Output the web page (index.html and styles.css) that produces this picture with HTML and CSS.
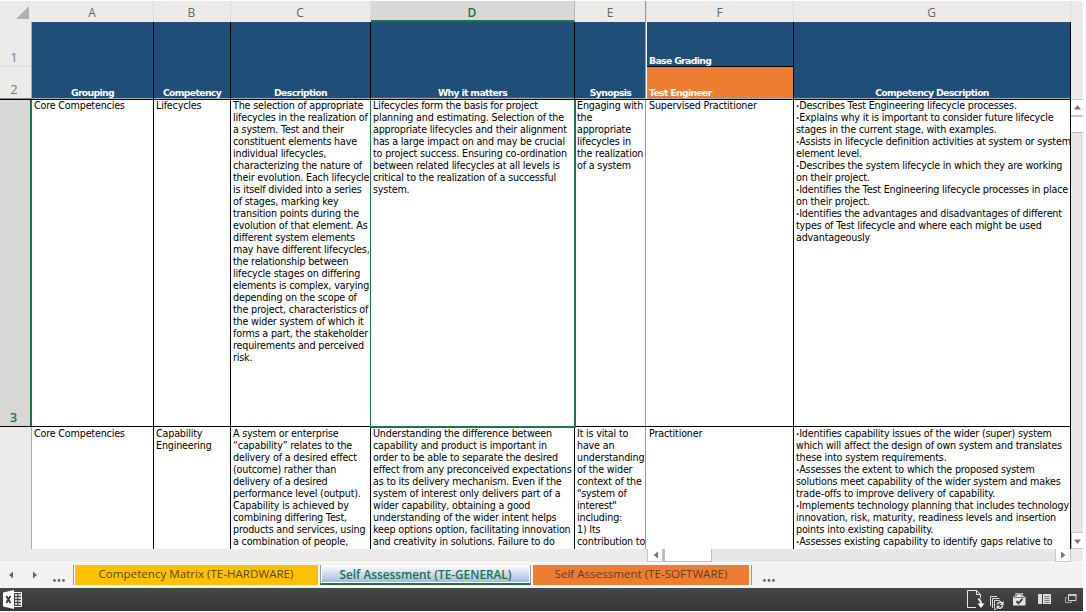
FILE: index.html
```html
<!DOCTYPE html>
<html lang="en">
<head>
<meta charset="utf-8">
<title>Competency Matrix</title>
<link rel="stylesheet" href="styles.css">
</head>
<body>
<div class="app">
  <div class="viewer">
    <div class="sheet">
      <div class="row letters">
        <div class="corner"><svg width="31" height="21"><path d="M29 5V18H16Z" fill="#b1b1b1"/></svg></div>
        <div class="letter">A</div><div class="letter">B</div><div class="letter">C</div>
        <div class="letter active">D</div><div class="letter last-frozen">E</div><div class="letter">F</div><div class="letter">G</div>
      </div>
      <div class="row titles">
        <div class="numbers"><div class="number one">1</div><div class="number two">2</div></div>
        <div class="title">Grouping</div><div class="title">Competency</div><div class="title">Description</div>
        <div class="title active">Why it matters</div><div class="title frozen">Synopsis</div>
        <div class="split"><div class="grading">Base Grading</div><div class="engineer">Test Engineer</div></div>
        <div class="title">Competency Description</div>
      </div>
      <div class="row first">
        <div class="number three">3</div>
        <div class="cell">Core Competencies</div>
        <div class="cell">Lifecycles</div>
        <div class="cell">The selection of appropriate
lifecycles in the realization of
a system. Test and their
constituent elements have
individual lifecycles,
characterizing the nature of
their evolution. Each lifecycle
is itself divided into a series
of stages, marking key
transition points during the
evolution of that element. As
different system elements
may have different lifecycles,
the relationship between
lifecycle stages on differing
elements is complex, varying
depending on the scope of
the project, characteristics of
the wider system of which it
forms a part, the stakeholder
requirements and perceived
risk.</div>
        <div class="cell selected">Lifecycles form the basis for project
planning and estimating. Selection of the
appropriate lifecycles and their alignment
has a large impact on and may be crucial
to project success. Ensuring co-ordination
between related lifecycles at all levels is
critical to the realization of a successful
system.</div>
        <div class="cell frozen">Engaging with
the
appropriate
lifecycles in
the realization
of a system</div>
        <div class="cell">Supervised Practitioner</div>
        <div class="cell"><b>•</b>Describes Test Engineering lifecycle processes.
<b>•</b>Explains why it is important to consider future lifecycle
stages in the current stage, with examples.
<b>•</b>Assists in lifecycle definition activities at system or system
element level.
<b>•</b>Describes the system lifecycle in which they are working
on their project.
<b>•</b>Identifies the Test Engineering lifecycle processes in place
on their project.
<b>•</b>Identifies the advantages and disadvantages of different
types of Test lifecycle and where each might be used
advantageously</div>
      </div>
      <div class="row second">
        <div class="number"></div>
        <div class="cell">Core Competencies</div>
        <div class="cell">Capability
Engineering</div>
        <div class="cell">A system or enterprise
“capability” relates to the
delivery of a desired effect
(outcome) rather than
delivery of a desired
performance level (output).
Capability is achieved by
combining differing Test,
products and services, using
a combination of people,</div>
        <div class="cell">Understanding the difference between
capability and product is important in
order to be able to separate the desired
effect from any preconceived expectations
as to its delivery mechanism. Even if the
system of interest only delivers part of a
wider capability, obtaining a good
understanding of the wider intent helps
keep options option, facilitating innovation
and creativity in solutions. Failure to do</div>
        <div class="cell frozen">It is vital to
have an
understanding
of the wider
context of the
"system of
interest"
including:
1) Its
contribution to</div>
        <div class="cell">Practitioner</div>
        <div class="cell"><b>•</b>Identifies capability issues of the wider (super) system
which will affect the design of own system and translates
these into system requirements.
<b>•</b>Assesses the extent to which the proposed system
solutions meet capability of the wider system and makes
trade-offs to improve delivery of capability.
<b>•</b>Implements technology planning that includes technology
innovation, risk, maturity, readiness levels and insertion
points into existing capability.
<b>•</b>Assesses existing capability to identify gaps relative to
desired capability and therefore recommend approaches</div>
      </div>
    </div>
    <div class="vscroll">
      <div class="vbutton up"><svg width="12" height="16"><path d="M3 9.500H10L6.500 5Z" fill="#777"/></svg></div>
      <div class="vthumb"></div>
      <div class="vbutton down"><svg width="12" height="16"><path d="M2 6.500H9L5.500 11Z" fill="#777"/></svg></div>
    </div>
  </div>
  <div class="hbar">
    <div class="hscroll">
      <div class="hbutton"><svg width="14" height="12"><path d="M10 2.500V9.500L5.500 6Z" fill="#777"/></svg></div>
      <div class="hthumb"></div>
      <div class="hbutton right"><svg width="14" height="12"><path d="M5 2.500V9.500L9.500 6Z" fill="#777"/></svg></div>
    </div>
  </div>
  <div class="tabs">
    <div class="nav">
      <svg width="73" height="25"><path d="M13 8.500V15.500L9 12ZM33 8.500V15.500L37 12Z" fill="#666"/><g fill="#666"><circle cx="54.500" cy="17.500" r="1.400"/><circle cx="59" cy="17.500" r="1.400"/><circle cx="63.500" cy="17.500" r="1.400"/></g></svg>
    </div>
    <div class="tab yellow"><span>Competency Matrix (TE-HARDWARE)</span></div>
    <div class="tab current"><span>Self Assessment (TE-GENERAL)</span></div>
    <div class="tab orange"><span>Self Assessment (TE-SOFTWARE)</span></div>
    <div class="more"><svg width="30" height="25"><g fill="#666"><circle cx="12.500" cy="17.500" r="1.400"/><circle cx="17" cy="17.500" r="1.400"/><circle cx="21.500" cy="17.500" r="1.400"/></g></svg></div>
  </div>
  <div class="status">
    <svg class="logo" width="20" height="19" viewBox="0 0 20 19"><path d="M0 2.500L11 0V19L0 16.500Z" fill="#fff"/><path d="M3.300 6L7.500 13M7.500 6L3.300 13" stroke="#333" stroke-width="1.700"/><path d="M11 2.500H18.500V16.500H11" fill="none" stroke="#fff"/><path d="M12 5H18M12 8H18M12 11H18M12 14H18" stroke="#fff" stroke-width="1.600"/><path d="M14.800 3V16" stroke="#3b3d3f"/></svg>
    <div class="tools">
      <svg width="18" height="21" viewBox="0 0 18 21" fill="none" stroke="#e8e8e8"><path d="M9 18.500H.5V1.500H9.500L13.500 5.500V9M9.500 1.500V5.500H13.500"/><path d="M11 10C13.500 10.500 14 12 14 15.500" stroke-width="2"/><path d="M10.500 14.500H17.500L14 19Z" fill="#fff" stroke="none"/></svg>
      <svg width="15" height="16" viewBox="0 0 15 16" fill="none" stroke="#ddd"><path d="M.5 10V.5H7M2.500 12V2.500H9.500M6 13.500H4.500V4.500H9.500L11 6"/><path d="M7.300 8.500C8.500 5.800 11 5.800 12.300 7.300M12.800 9.500C11.500 12.800 9 12.800 7.800 11.200" stroke-width="1.600"/><path d="M13.700 5V9H9.700ZM6.500 13.500V9.700H10.300Z" fill="#ddd" stroke="none"/></svg>
      <svg width="14" height="14" viewBox="0 0 14 14"><path d="M0 4L2.500 3V0H10V3L12.500 4V12.500H0Z" fill="#e6e6e6"/><path d="M3.500 3V1H9V3M1 4.500H11.500" fill="none" stroke="#777"/><path d="M3.500 8L5.500 10.300L9.500 5.800" fill="none" stroke="#444" stroke-width="2"/></svg>
      <svg width="14" height="11" viewBox="0 0 14 11"><path d="M0 0H4V10H0ZM5 0H13V10H5Z" fill="#dedede"/><path d="M6.500 2.500H11.500M6.500 4.500H11.500M6.500 6.500H11.500M6.500 8.500H11.500" stroke="#777"/></svg>
      <svg width="12" height="10" viewBox="0 0 12 10" fill="none" stroke="#ddd"><path d="M3.500 1H11V6.500H3.500Z"/><path d="M3 1H11.500" stroke-width="1.500"/><path d="M2 3.500H.5V8.500H6.500V7.500" stroke="#aaa"/></svg>
    </div>
  </div>
</div>
</body>
</html>
```
FILE: styles.css
```css
* { box-sizing: border-box; }
body { margin: 0; background: #fff; overflow: hidden; }
svg { display: block; }
.app { width: 1083px; height: 612px; padding: 1px 0; display: flex; flex-direction: column; font-family: "DejaVu Sans", sans-serif; }
.viewer { display: flex; height: 548px; background: #ecebea; }
.sheet { width: 1071px; height: 548px; overflow: hidden; }
.row { display: grid; grid-template-columns: 32px 122px 77px 140px 204px 72px 147px 277px; }

.letters { height: 21px; grid-template-rows: 21px; font: 12px/24px "Open Sans", sans-serif; color: #666; }
.letter { text-align: center; border-right: 1px solid #dedddc; padding-right: 1px; }
.letter.active { background: #d8d8d6; color: #217346; font-weight: 600; border-bottom: 2px solid #217346; border-right-color: #b5b5b5; }
.letter.last-frozen { box-shadow: inset -1px 0 #999; }

.titles { height: 78px; grid-template-rows: 77px; border-bottom: 1px solid #000; background: #1f4e78; box-shadow: inset 0 -1px #aaa; }
.title { display: flex; align-items: flex-end; justify-content: center; border-right: 1px solid #000; box-shadow: inset 0 -1px #aaa; }
.title, .split { color: #fff; font-size: 9.3px; line-height: 12px; font-weight: bold; letter-spacing: -0.66px; white-space: nowrap; }
.title.active { box-shadow: inset 0 -1px #aaa, inset 0 -2px #217346; }
.title.frozen, .cell.frozen { border-right: 1px solid #fff; box-shadow: inset -1px 0 #999; }
.split { border-right: 1px solid #000; display: grid; grid-template-rows: 45px 32px; }
.grading, .engineer { display: flex; align-items: flex-end; padding-left: 2px; }
.grading { border-bottom: 1px solid #000; line-height: 10px; }
.engineer { background: #ed7d31; box-shadow: inset 0 -1px #aaa; }

.numbers { background: #ecebea; border-right: 1px solid #aaa; border-bottom: 1px solid #888; }
.number { display: flex; align-items: flex-end; justify-content: center; padding-right: 3px; font: 13px/17px "Open Sans", sans-serif; color: #777; background: #ecebea; border-right: 1px solid #aaa; }
.numbers .number { border-right: 0; }
.number.one { height: 45px; border-bottom: 1px solid #dcdcdc; }
.number.two { height: 31px; }
.number.three { background: #d8d8d6; color: #217346; font-weight: 600; border-right: 2px solid #217346; }

.first { height: 327px; border-bottom: 1px solid #000; }
.second { height: 122px; }
.cell { background: #fff; color: #000; border-right: 1px solid #000; padding-left: 2px; overflow: hidden; white-space: pre; font-size: 9.6px; line-height: 12px; letter-spacing: -0.18px; }
.cell b { font-size: 5px; line-height: 1px; letter-spacing: 0; vertical-align: 1.500px; }
.second .cell { padding-top: 1px; }
.cell.selected { position: relative; z-index: 1; border-right-color: #217346; box-shadow: -1px 0 #217346, 1px 0 #217346, -1px 2px #217346, 1px 2px #217346; }

.vscroll { width: 12px; margin-top: 98px; height: 450px; display: flex; flex-direction: column; background: #e6e6e6; }
.vbutton { height: 18px; background: #fff; border-bottom: 2px solid #c4c6c8; border-top: 1px solid #c4c6c8; }
.vthumb { height: 16px; background: #fff; border-bottom: 1px solid #b8babc; }
.vbutton.down { margin-top: auto; height: 17px; border-left: 1px solid #b8babc; border-bottom-width: 1px; }

.hbar { height: 14px; background: #ecebea; border-bottom: 1px solid #fff; }
.hscroll { width: 424px; height: 13px; margin-left: 647px; background: #e6e6e6; display: flex; }
.hbutton { width: 16px; height: 13px; background: #fff; border: 1px solid #c4c6c8; border-top: 0; }
.hthumb { width: 49px; background: #fff; border: 1px solid #b8babc; border-left-width: 2px; border-top: 0; }
.hbutton.right { margin-left: auto; }

.tabs { height: 25px; background: #f3f2f1; display: flex; align-items: flex-start; font: 11.6px/18px "Open Sans", sans-serif; }
.nav { width: 73px; height: 25px; }
.tab { margin-top: 2px; height: 20px; display: flex; justify-content: center; white-space: nowrap; }
.yellow { width: 245px; background: #ffc000; color: #5d4a16; border-left: 1px solid #999; box-shadow: inset 1px 0 #fff; }
.current { margin: 2px 2px 0; width: 211px; background: linear-gradient(#fff, #9eb5df); color: #217346; font-weight: 600; font-size: 11.800px; border: solid #999; border-width: 0 1px 2px; border-bottom-color: #217346; box-shadow: inset 1px -1px #fff, inset -1px 0 #fff; }
.orange { width: 216px; background: #ed7d31; color: #693c20; }
.more { margin: 2px 0 0 2px; height: 20px; border-left: 1px solid #999; }
.more svg { margin-top: -2px; }

.status { height: 23px; background: linear-gradient(#454849, #343537); display: flex; justify-content: space-between; }
.logo { margin: 2px 0 0 3px; }
.tools { display: flex; align-items: flex-start; }
.tools svg:nth-child(1) { margin: 1px 5px 0 0; }
.tools svg:nth-child(2) { margin: 8px 8px 0 0; }
.tools svg:nth-child(3) { margin: 5px 11px 0 0; }
.tools svg:nth-child(4) { margin: 6px 13px 0 0; }
.tools svg:nth-child(5) { margin: 6px 6px 0 0; }
```
